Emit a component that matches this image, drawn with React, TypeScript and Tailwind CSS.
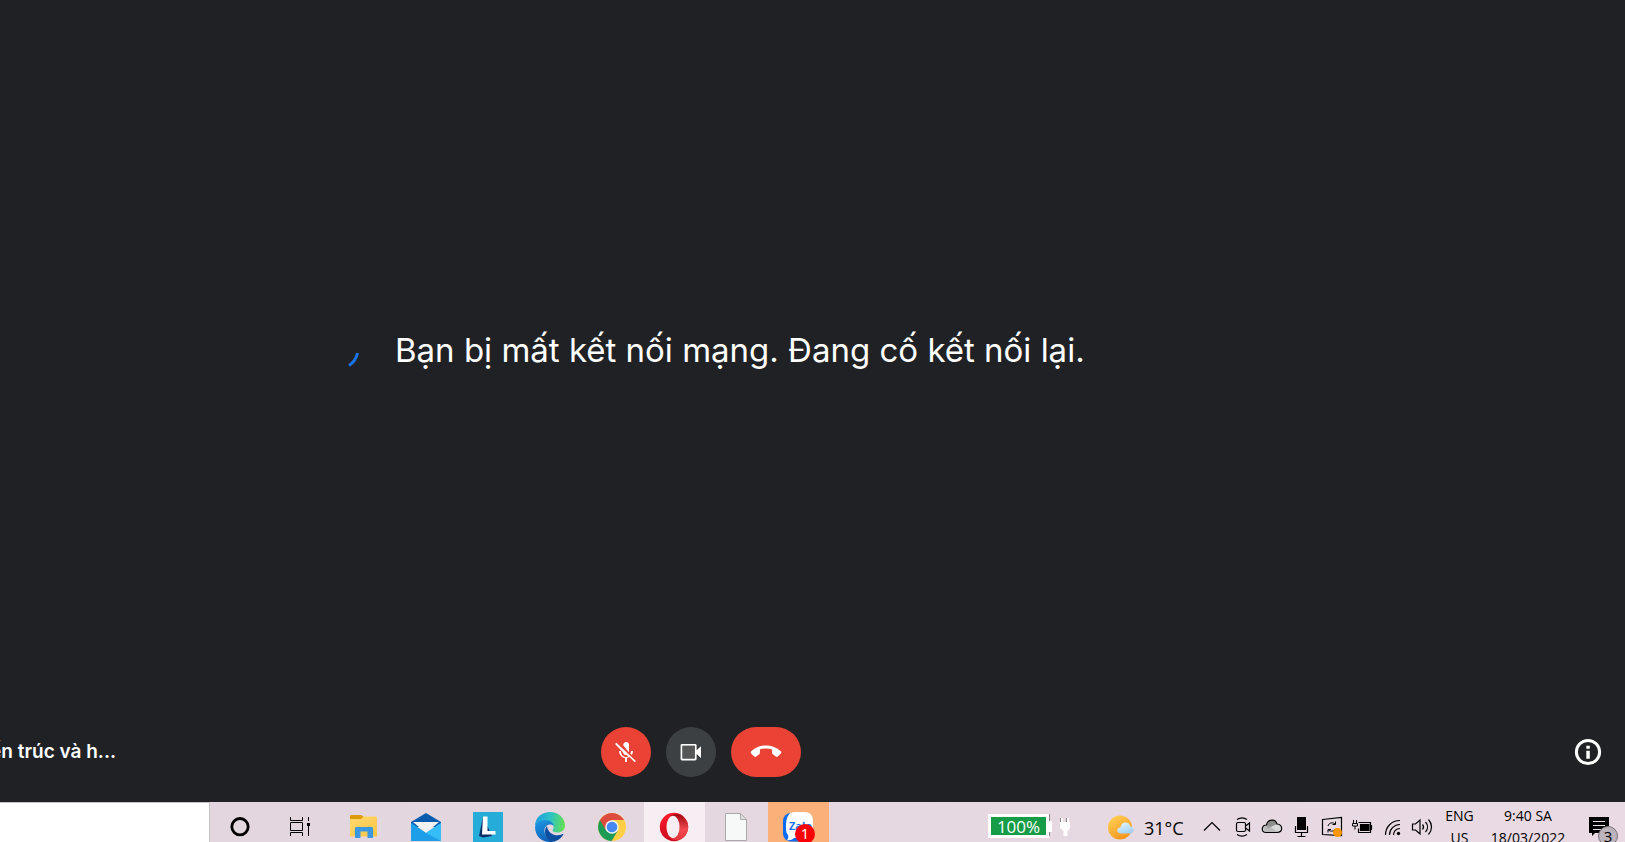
import type { ReactNode } from "react";

function TaskButton({ label, tone = "", children }: { label: string; tone?: string; children: ReactNode }) {
  return (
    <button aria-label={label} className="relative flex h-10 w-[62px] shrink-0 pr-px">
      <span className={`block h-10 w-full ${tone}`}>
        <svg viewBox="0 0 61 40" className="block h-10 w-[61px]">
          {children}
        </svg>
      </span>
    </button>
  );
}

function TrayButton({ label, children }: { label: string; children: ReactNode }) {
  return (
    <button aria-label={label} className="block h-10 w-[30px] shrink-0">
      <svg viewBox="0 0 30 40" className="block h-10 w-[30px]" fill="none" stroke="#000" strokeWidth="1.2">
        {children}
      </svg>
    </button>
  );
}

function Spinner() {
  return (
    <svg viewBox="0 0 42 42" className="h-[42px] w-[42px] shrink-0" role="status" aria-hidden="true">
      <path d="M32 35.500 A19 19 0 0 0 40.500 23" fill="none" stroke="#1a73e8" strokeWidth="3" />
    </svg>
  );
}

function CallControls() {
  return (
    <div className="flex items-center gap-[15px]">
      <button aria-label="Bật micrô" className="flex h-[50px] w-[50px] items-center justify-center rounded-full bg-[#ea4335]">
        <svg viewBox="0 0 24 24" className="h-6 w-6" fill="#fff">
          <path d="M9.200 5.200V5A3 3 0 0 1 15 4v7c0 .4-.1.8-.2 1.200z" />
          <path d="M19 11h-2c0 .9-.25 1.750-.67 2.480l1.460 1.460A6.900 6.900 0 0 0 19 11z" />
          <path d="M2.300 2.800 1 4.100l8 8.100a3 3 0 0 0 3.700 2.700l1.500 1.500c-.67.38-1.420.6-2.200.6-2.760 0-5-2.240-5-6H5c0 3.530 2.610 6.430 6 6.920V22h2v-4.080c.91-.13 1.770-.45 2.550-.9l5.100 5.200 1.300-1.300z" />
        </svg>
      </button>
      <button aria-label="Tắt máy ảnh" className="flex h-[50px] w-[50px] items-center justify-center rounded-full bg-[#3c4043]">
        <svg viewBox="0 0 24 24" className="h-6 w-6" fill="#fff">
          <path d="M17.600 10.200V5.300c0-.8-.6-1.400-1.400-1.400H3C2.200 3.900 1.600 4.500 1.600 5.300V19c0 .8.6 1.400 1.400 1.400h13.200c.8 0 1.400-.6 1.400-1.400v-4.900l4.400 4V6.200zM15.700 18.500H3.500V5.800h12.200z" />
          <path d="M3.500 5.800h12.200v12.700H3.500z" fill="#565656" />
        </svg>
      </button>
      <button aria-label="Rời khỏi cuộc gọi" className="flex h-[50px] w-[70px] items-center justify-center rounded-full bg-[#ea4335]">
        <svg viewBox="0 0 32 24" className="h-6 w-8" fill="#fff">
          <path d="M16 5.500c5.600 0 10.800 2 14.800 5.700.7.6.7 1.600.1 2.200l-3.100 3.100c-.5.500-1.400.6-2 .1l-3-2.300c-.4-.3-.7-.8-.7-1.300V9.400a20 20 0 0 0-12.200 0V13c0 .5-.3 1-.7 1.300l-3 2.300c-.6.5-1.500.4-2-.1l-3.100-3.100c-.6-.6-.6-1.600.1-2.200C5.200 7.500 10.400 5.500 16 5.500z" />
        </svg>
      </button>
    </div>
  );
}

function Meeting() {
  return (
    <main className="flex min-h-0 flex-1 flex-col bg-[#202124] font-[Inter,'Open_Sans',sans-serif] text-white">
      <section className="flex flex-1 items-center gap-9 pl-[317px]">
        <Spinner />
        <p className="whitespace-nowrap pb-[3px] text-[33px] leading-[44px]">Bạn bị mất kết nối mạng. Đang cố kết nối lại.</p>
      </section>
      <footer className="flex h-[100px] shrink-0 items-center pr-[23px]">
        <div className="w-[37.5%]">
          <h1 className="flex w-[116px] justify-end overflow-hidden whitespace-nowrap text-[19px] font-semibold leading-7">
            ến trúc và h...
          </h1>
        </div>
        <CallControls />
        <button aria-label="Chi tiết cuộc họp" className="ml-auto">
          <svg viewBox="0 0 28 28" className="block h-7 w-7">
            <circle cx="14" cy="14" r="11.600" fill="none" stroke="#fff" strokeWidth="3" />
            <path d="M12.300 7.700h3.500v3h-3.500zM12.300 12.700h3.500v8h-3.500z" fill="#fff" />
          </svg>
        </button>
      </footer>
    </main>
  );
}

function PinnedApps() {
  return (
    <nav className="flex shrink-0">
      <TaskButton label="Cortana">
        <circle cx="30" cy="24.700" r="8.200" fill="none" stroke="#000" strokeWidth="2.800" />
      </TaskButton>
      <TaskButton label="Task View">
        <g fill="none" stroke="#000" strokeWidth="1">
          <path d="M18.500 15v3.500h12V15M18.500 34v-3.500h12V34M18.500 20.500h12v8h-12zM36.500 15v4M36.500 24v10" />
          <path d="M35 21h3v3h-3z" fill="#000" stroke="none" />
        </g>
      </TaskButton>
      <TaskButton label="File Explorer">
        <defs>
          <linearGradient id="folder" x1="0" y1="0" x2="1" y2="1">
            <stop offset="0" stopColor="#ffd96c" />
            <stop offset="1" stopColor="#fbc547" />
          </linearGradient>
        </defs>
        <path d="M16 14.500c0-.8.500-1.500 1.300-1.500h10l2.700 2-2 2H16z" fill="#dd9a0b" />
        <path d="M16 17h11l2.500-2.500h12c.9 0 1.500.6 1.500 1.500v18.500H16z" fill="url(#folder)" />
        <path d="M21 36V26.500c0-.9.600-1.500 1.500-1.500h15.200c.8 0 1.300.6 1.300 1.500V36h-5.500v-6.500h-7V36z" fill="#3b97df" />
      </TaskButton>
      <TaskButton label="Mail">
        <path d="M15 20 30 11l15 9v5H15z" fill="#0b5cad" />
        <path d="M15 21v18h30V21L30 31z" fill="#27a9ee" />
        <path d="M17 20h26l-13 11z" fill="#f3f3f3" />
        <path d="M15 21v18h30L30 31z" fill="#1c9fe8" />
        <path d="M45 21 30 31l15 8z" fill="#34bdf6" />
      </TaskButton>
      <TaskButton label="Lenovo Vantage">
        <path d="M15 10h30v30H15z" fill="#25acd8" />
        <path d="m25 15-4 19 4 1.500 9-1.500z" fill="#0b2f66" />
        <path d="M25 14.500h4.500V29h8v3.500H24z" fill="#fff" />
      </TaskButton>
      <TaskButton label="Microsoft Edge">
        <defs>
          <linearGradient id="edgeTop" x1="0" y1="0.500" x2="1" y2="0.600">
            <stop offset="0" stopColor="#1f9fe0" />
            <stop offset="0.500" stopColor="#2fc3c4" />
            <stop offset="1" stopColor="#66e04f" />
          </linearGradient>
          <linearGradient id="edgeLeft" x1="0" y1="0" x2="0.400" y2="1">
            <stop offset="0" stopColor="#1d9ae4" />
            <stop offset="1" stopColor="#0f63b8" />
          </linearGradient>
        </defs>
        <path d="M15 24C15 15.500 22 10 30 10c8.500 0 15 6 15 13.500 0 4.500-3.500 7-7.500 7-3 0-5-1-5-2.300 0-.8 1.200-1.300 1.200-3.200 0-3-3.500-6.500-8.700-6.500-5 0-8.500 2.500-10 5.500z" fill="url(#edgeTop)" />
        <path d="M15 25c.5-4 5-7 10-7 4.800 0 8.300 2.800 8.700 6-1-1-2.500-1.700-4-1.500-4 .5-6 4-5 8.500 1 4.500 4 7.500 8 9h-3C21 40 15 33.500 15 25z" fill="url(#edgeLeft)" />
        <path d="M27 24c-4 5-2 12.500 4 16 5-.2 9.500-3 12.300-7.300.3-.5-.1-.9-.6-.6-6 3.100-14.700.400-15.700-8.100z" fill="#0c4fa0" />
      </TaskButton>
      <TaskButton label="Google Chrome">
        <circle cx="30" cy="25" r="14" fill="#ffce42" />
        <path d="M17.900 18A14 14 0 0 0 29.500 39L36 28.500 30 25z" fill="#1b9b56" />
        <path d="M17.900 18A14 14 0 0 1 42.100 18H30L24 28.500z" fill="#dd4b3e" />
        <circle cx="30" cy="25" r="6.800" fill="#f4f4f4" />
        <circle cx="30" cy="25" r="5.300" fill="#4587f3" />
      </TaskButton>
      <TaskButton label="Opera" tone="bg-[#f6eef2]">
        <defs>
          <linearGradient id="operaRing" x1="0" y1="0" x2="0" y2="1">
            <stop offset="0" stopColor="#ff1b2d" />
            <stop offset="1" stopColor="#c80d1c" />
          </linearGradient>
          <linearGradient id="operaSide" x1="0" y1="0" x2="0" y2="1">
            <stop offset="0" stopColor="#a00510" />
            <stop offset="0.600" stopColor="#f04a4f" />
            <stop offset="1" stopColor="#e8343c" />
          </linearGradient>
        </defs>
        <ellipse cx="30" cy="25" rx="14.200" ry="14.200" fill="url(#operaRing)" />
        <path d="M27 13.500c5-2.500 9-2 12 1 7 6 7 15 0 21-3 3-8 3.500-12 1z" fill="url(#operaSide)" />
        <ellipse cx="29" cy="25" rx="6.500" ry="11.300" fill="#f6eef2" />
      </TaskButton>
      <TaskButton label="Document">
        <path d="M19.500 11.500h15l6 6v21h-21z" fill="#f7f8f8" stroke="#a9a9a9" />
        <path d="M34.500 11.500v6h6z" fill="#e1e1e1" stroke="#a9a9a9" />
      </TaskButton>
      <button aria-label="Zalo, 1 thông báo" className="relative h-10 w-[62px] shrink-0 pr-px">
        <span className="block h-10 bg-[#fab078]">
          <svg viewBox="0 0 61 40" className="block h-10 w-[61px]">
            <rect x="15" y="11" width="27" height="28.500" rx="8" fill="#0b6cf0" />
            <path d="M27 10h9c6 0 9 3 9 9v8c0 6-3 9-9 9H26c-2 2-5 2.500-7 2 1.500-1.500 1.500-3 1-5-2-2-2-5-2-8 0-9 2-15 9-15z" fill="#fff" />
          </svg>
        </span>
        <span className="absolute left-[21px] top-[17px] font-['Open_Sans',sans-serif] text-[11px] font-bold leading-[14px] text-[#1a74f0]">Zalo</span>
        <span className="absolute left-[27px] top-[22px] h-5 w-5 rounded-full bg-[#fb0007] text-center font-['Noto_Sans',sans-serif] text-[14px] leading-5 text-white">1</span>
      </button>
    </nav>
  );
}

function Tray() {
  return (
    <div className="ml-auto flex shrink-0 font-['Open_Sans','Noto_Sans',sans-serif] text-black">
      <div className="flex w-[118px] items-start pt-3">
        <div className="h-6 w-[61px] border-[3px] border-white bg-[#169b46] text-center text-[17px] leading-[19px] text-white">100%</div>
        <svg viewBox="0 0 24 24" className="h-6 w-6" fill="#fff">
          <path d="M0 7h3v11H0zM12 4h2v4h4V4h2v4h1v6l-2.500 3v5h-4v-5L11 14V8h1z" />
          <path d="M.5 0v7M.5 18v4M11.500 4v4M17.500 4v4" stroke="#8a8288" fill="none" />
        </svg>
      </div>
      <button aria-label="Thời tiết 31°C" className="flex h-10 w-[91px]">
        <svg viewBox="0 0 38 40" className="h-10 w-[38px] shrink-0">
          <defs>
            <linearGradient id="sun" x1="0" y1="0" x2="0.600" y2="1">
              <stop offset="0" stopColor="#ffd75a" />
              <stop offset="1" stopColor="#f7951d" />
            </linearGradient>
            <linearGradient id="weatherCloud" x1="0" y1="0" x2="0.600" y2="1">
              <stop offset="0" stopColor="#effaff" />
              <stop offset="1" stopColor="#9fd0f3" />
            </linearGradient>
          </defs>
          <circle cx="14" cy="25.500" r="12" fill="url(#sun)" />
          <path d="M15 31.500c-5 0-5-6-.5-6 .5-3 2-5 5-5 2.500 0 4.300 1.500 4.800 4 4.500 0 4.500 7-.3 7z" fill="url(#weatherCloud)" />
        </svg>
        <span className="pt-[14px] text-[18px] leading-6">31°C</span>
      </button>
      <TrayButton label="Hiện biểu tượng ẩn">
        <path d="m7 28.500 8-8 8 8" />
      </TrayButton>
      <TrayButton label="Meet Now">
        <rect x="9.500" y="20.500" width="9" height="9" rx="1.500" />
        <path d="m18.500 24 4-3v8l-4-3M10 17.500c3-2 7-2 10 0M10 32.500c3 2 7 2 10 0" />
      </TrayButton>
      <TrayButton label="OneDrive">
        <path d="M9 30.500c-5.500 0-4.500-7.500.5-7.500 1-6 9-6.500 10.500-1 6 .500 6.500 8.500 0 8.500z" fill="#d9d9d9" stroke="none" />
        <path d="M9.500 23c1-6 9-6.500 10.500-1l-9.500 4.500z" fill="#8d8d8d" stroke="none" />
        <path d="m6 25 5-2 10 7H8z" fill="#a7a7a7" stroke="none" opacity=".6" />
        <path d="M9 30.500c-5.500 0-4.500-7.500.5-7.500 1-6 9-6.500 10.500-1 6 .500 6.500 8.500 0 8.500z" />
      </TrayButton>
      <TrayButton label="Micrô">
        <rect x="10" y="15" width="9" height="13" fill="#000" stroke="none" />
        <path d="M8.500 24v6.500h12V24M14.500 30.500v4M10.500 34.500h8" />
      </TrayButton>
      <TrayButton label="Windows Update">
        <path d="M5.500 17.500 24.500 15.500V33.500L5.500 32.500z" />
        <path d="M11 24c1-3.500 5-4 7-2M18.500 19.500v3H15.500M18 27c-1 2.500-5 3-7 .5M11 30.500v-3h3" strokeWidth="1" />
        <circle cx="20.500" cy="30.500" r="4.500" fill="#ff9500" stroke="none" />
      </TrayButton>
      <TrayButton label="Pin">
        <path d="M11.500 20.500h12v10h-12v-4M24.500 23v5" />
        <path d="M13.500 22.500h8.500v6h-8.500z" fill="#000" />
        <path d="M6.500 18v3M9.500 18v3M5.500 21.500h5v2.500h-5zM8 24v3.500" strokeWidth="1" />
      </TrayButton>
      <TrayButton label="Mạng Wi-Fi">
        <path d="M8.500 33C8.500 25 14.500 18.500 23 18.500M12.500 33c0-5.500 4.500-10.500 10.500-10.500M16.500 33c0-3.500 2.500-6.500 6.500-6.500" />
        <circle cx="21.500" cy="31.500" r="1.700" fill="#000" stroke="none" />
      </TrayButton>
      <TrayButton label="Âm lượng">
        <path d="M5.500 22v6h3l4.500 4V18l-4.500 4zM15.500 22.500c1.300 1.500 1.300 3.500 0 5M18.500 20c2.700 3 2.700 7 0 10M21.500 17.500c4 4.500 4 10.500 0 15" />
      </TrayButton>
      <button className="w-[45px] pt-[3px] text-center text-[14px] leading-[22px]">
        <span className="block">ENG</span>
        <span className="block">US</span>
      </button>
      <button className="w-[92px] whitespace-nowrap pt-[3px] text-center text-[14px] leading-[22px]">
        <span className="block">9:40 SA</span>
        <span className="block">18/03/2022</span>
      </button>
      <button aria-label="Thông báo: 3" className="relative h-10 w-[51px]">
        <svg viewBox="0 0 51 40" className="block h-10 w-[51px]">
          <path d="M15 15h20v16H21l-3 3v-3h-3z" fill="#000" />
          <path d="M19 19.500h12M19 23.500h12M19 27.500h8" stroke="#eadbe4" />
        </svg>
        <span className="absolute left-6 top-6 h-5 w-5 rounded-full border border-[#77717a] bg-[#bdb3ba] text-center text-[15px] leading-[19px]">3</span>
      </button>
    </div>
  );
}

export default function App() {
  return (
    <div className="flex h-screen flex-col overflow-hidden">
      <Meeting />
      <div className="flex h-10 shrink-0 overflow-hidden bg-linear-to-r from-[#e2d5de] to-[#e9dae3]">
        <input aria-label="Tìm kiếm" className="w-[210px] shrink-0 border-r border-t border-[#c6c6c6] bg-white px-3 outline-none" />
        <PinnedApps />
        <Tray />
      </div>
    </div>
  );
}
